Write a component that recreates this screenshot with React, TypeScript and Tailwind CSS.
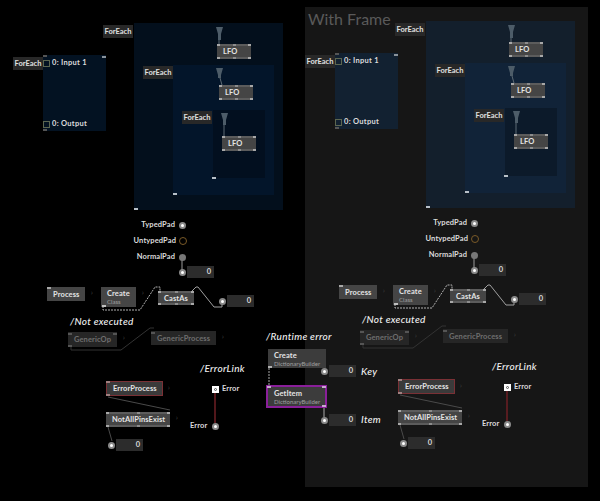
import React from 'react'

const font = { fontFamily: 'Lato, "Open Sans", sans-serif' }

const Pins = ({ className = '' }: { className?: string }) => (
  <div className={`absolute left-0 right-0 h-[2px] flex justify-between bg-[#5c5c5c] ${className}`}>
    <span className="w-[3px] bg-[#a8a8a8]" />
    <span className="w-[3px] bg-[#8c8c8c]" />
    <span className="w-[3px] bg-[#a8a8a8]" />
  </div>
)

type NodeProps = { className: string; label: string; sub?: string; pins?: boolean; text?: string; arrow?: boolean }

const Node = ({ className, label, sub, pins = true, text = 'text-[#e4e4e4]', arrow = false }: NodeProps) => (
  <div className={`absolute flex flex-col justify-center pl-[6px] text-[7.5px] leading-[9px] font-bold tracking-[0.1px] ${text} ${className}`}>
    {pins && <Pins className="top-0" />}
    <span>{label}</span>
    {sub && <span className="text-[6px] leading-[7px] font-normal tracking-normal text-[#a0a0a0]">{sub}</span>}
    {pins && <Pins className="bottom-0" />}
    {arrow && <span className="absolute right-[-8px] top-[1px] text-[8px] font-normal text-[#3a3a3a]">›</span>}
  </div>
)

const Tag = ({ className }: { className: string }) => (
  <div className={`absolute h-[13px] w-[30px] bg-[#282828] text-[7.5px] leading-[13px] font-bold text-[#e0e0e0] text-center ${className}`}>ForEach</div>
)

const Dot = () => (
  <span className="w-[7px] h-[7px] rounded-full bg-[#8a8a8a] flex items-center justify-center">
    <span className="w-[3px] h-[3px] rounded-full bg-white" />
  </span>
)

const Pad = ({ className }: { className: string }) => (
  <div className={`absolute flex items-center gap-[1px] ${className}`}>
    <Dot />
    <div className="w-[27px] h-[12px] bg-[#2c2c2c] text-[7.5px] leading-[12px] text-right pr-[3px] font-bold text-[#d8d8d8]">0</div>
  </div>
)

const Note = ({ className, children }: { className: string; children: React.ReactNode }) => (
  <div className={`absolute text-[10px] leading-[12px] italic font-medium tracking-[0.3px] text-[#f0f0f0] whitespace-nowrap ${className}`}>{children}</div>
)

const Small = ({ className }: { className: string }) => <span className={`absolute w-[4px] h-[2px] ${className}`} />

// everything that exists twice: once on black, once inside the frame
const Patch = ({ className }: { className: string }) => (
  <div className={`absolute inset-0 ${className}`}>
    <div className="absolute left-[43px] top-[55px] w-[63px] h-[76px] bg-[#0a3a70]/30" />
    <div className="absolute left-[134px] top-[23px] w-[149px] h-[187px] bg-[#0a3a70]/25" />
    <div className="absolute left-[173px] top-[65px] w-[101px] h-[130px] bg-[#0a3f80]/15" />
    <div className="absolute left-[213px] top-[110px] w-[52px] h-[68px] bg-black/25" />

    <svg className="absolute left-0 top-0" width="600" height="501" fill="none">
      <path d="M216 27h7l-2 7v6h-3v-6z" fill="#4d5c68" />
      <path d="M216 68h7l-2 7v3h-3v-3z" fill="#4d5c68" />
      <path d="M221 113h7l-2 7v5h-3v-5z" fill="#4d5c68" />
      <path d="M219 40v4M220 78l2 7M224 125v11" stroke="#5d6a74" />
      <path d="M182 260v10" stroke="#9a9a9a" />
      <path d="M103 306v4h37l15-23h5v4" stroke="#b0b0b0" strokeDasharray="2 1" />
      <path d="M192 291l4-4h2l16 20h8v-5" stroke="#a0a0a0" />
      <path d="M71 347v3h50l29-22h4" stroke="#333" />
      <path d="M108 397l62 13M108 427l4 14" stroke="#4a4a4a" />
      <path d="M215 393v30" stroke="#6e1f24" strokeWidth="1.5" />
    </svg>

    <Tag className="left-[103px] top-[25px]" />
    <Tag className="left-[143px] top-[66px]" />
    <Tag className="left-[182px] top-[111px]" />
    <Tag className="left-[13px] top-[57px]" />

    <Node className="left-[217px] top-[44px] w-[34px] h-[15px] bg-[#454545]" label="LFO" />
    <Node className="left-[219px] top-[85px] w-[34px] h-[15px] bg-[#454545]" label="LFO" />
    <Node className="left-[222px] top-[136px] w-[34px] h-[15px] bg-[#454545]" label="LFO" />

    <Small className="left-[134px] top-[208px] bg-[#b8c0c8]" />
    <Small className="left-[173px] top-[193px] bg-[#b8c0c8]" />
    <Small className="left-[212px] top-[177px] bg-[#b8c0c8]" />
    <Small className="left-[102px] top-[56px] bg-[#8a929a]" />
    <Small className="left-[43px] top-[55px] border border-[#555]" />
    <Small className="left-[43px] top-[129px] border border-[#555]" />

    <div className="absolute left-[43px] top-[57px] h-[73px] flex flex-col justify-between">
      <div className="flex items-center gap-[2px]">
        <span className="w-[7px] h-[7px] border border-[#5c6650]" />
        <span className="text-[7.5px] leading-[12px] font-bold tracking-[0.3px] text-[#dcdcdc] whitespace-nowrap">0: Input 1</span>
      </div>
      <div className="flex items-center gap-[2px]">
        <span className="w-[7px] h-[7px] border border-[#5c6650]" />
        <span className="text-[7.5px] leading-[12px] font-bold tracking-[0.3px] text-[#dcdcdc] whitespace-nowrap">0: Output</span>
      </div>
    </div>

    <div className="absolute left-[125px] top-[219px] w-[62px] flex flex-col items-end gap-[4px] text-[7.5px] leading-[12px] font-bold tracking-[0.1px] text-[#dcdcdc]">
      <div className="flex items-center gap-[4px] pr-[1px]">TypedPad<Dot /></div>
      <div className="flex items-center gap-[3px]">UntypedPad<span className="w-[8px] h-[8px] rounded-full border-[1.5px] border-[#7a5a28]" /></div>
      <div className="flex items-center gap-[4px] pr-[1px]">NormalPad<span className="w-[7px] h-[7px] rounded-full bg-[#777]" /></div>
    </div>
    <Pad className="left-[179px] top-[266px]" />

    <Node className="left-[47px] top-[287px] w-[38px] h-[14px] bg-[#454545]" label="Process" pins={false} arrow />
    <Small className="left-[47px] top-[287px] bg-[#a8a8a8]" />
    <Node className="left-[101px] top-[287px] w-[35px] h-[20px] bg-[#454545]" label="Create" sub="Class" pins={false} arrow />
    <Small className="left-[102px] top-[305px] bg-[#c0c0c0]" />
    <Node className="left-[158px] top-[291px] w-[36px] h-[14px] bg-[#454545]" label="CastAs" />
    <Pad className="left-[219px] top-[295px]" />

    <Note className="left-[70px] top-[315px]">/Not executed</Note>
    <Node className="left-[68px] top-[332px] w-[49px] h-[15px] bg-[#262626]" label="GenericOp" pins={false} text="text-[#6e6e6e]" arrow />
    <Small className="left-[68px] top-[333px] bg-[#555]" />
    <Small className="left-[113px] top-[333px] bg-[#555]" />
    <Small className="left-[68px] top-[345px] bg-[#555]" />
    <Node className="left-[151px] top-[331px] w-[65px] h-[14px] bg-[#262626]" label="GenericProcess" pins={false} text="text-[#6e6e6e]" arrow />
    <Small className="left-[151px] top-[332px] bg-[#555]" />

    <Node className="left-[106px] top-[381px] w-[57px] h-[15px] bg-[#3a3a3a] border border-[#7a3035]" label="ErrorProcess" pins={false} arrow />
    <Small className="left-[106px] top-[381px] bg-[#a08080]" />
    <Small className="left-[106px] top-[394px] bg-[#a08080]" />
    <Node className="left-[106px] top-[412px] w-[64px] h-[15px] bg-[#454545]" label="NotAllPinsExist" arrow />
    <Pad className="left-[108px] top-[439px]" />

    <Note className="left-[200px] top-[362px]">/ErrorLink</Note>
    <div className="absolute left-[212px] top-[383px] flex items-center gap-[3px] text-[7.5px] leading-[12px] font-bold tracking-[0.1px] text-[#dcdcdc]">
      <span className="w-[7px] h-[7px] bg-white flex items-center justify-center">
        <span className="w-[3px] h-[3px] rounded-full border border-[#555]" />
      </span>
      Error
    </div>
    <div className="absolute left-[190px] top-[420px] flex items-center gap-[5px] text-[7.5px] leading-[12px] font-bold tracking-[0.1px] text-[#dcdcdc]">
      Error
      <Dot />
    </div>
  </div>
)

export default function App() {
  return (
    <div className="relative w-[600px] h-[501px] overflow-hidden bg-black" style={font}>
      <div className="absolute left-[305px] top-[7px] w-[283px] h-[480px] bg-[#161616]">
        <span className="absolute left-[3px] top-0 text-[16px] leading-[23px] text-[#5a5a5a]">With Frame</span>
      </div>

      <Patch className="" />
      <Patch className="left-[292px] top-[-2px]" />

      <Note className="left-[266px] top-[330px]">/Runtime error</Note>
      <svg className="absolute left-0 top-0" width="600" height="501" fill="none">
        <path d="M269 368v17" stroke="#aaa" strokeDasharray="2 1" />
        <path d="M324 408v9" stroke="#aaa" />
      </svg>
      <Node className="left-[268px] top-[349px] w-[58px] h-[19px] bg-[#3c3c3c]" label="Create" sub="DictionaryBuilder" pins={false} />
      <Node className="left-[266px] top-[385px] w-[61px] h-[23px] bg-[#3c3c3c] border-2 border-[#8a1f9a]" label="GetItem" sub="DictionaryBuilder" pins={false} />
      <Small className="left-[268px] top-[366px] bg-[#b0b0b0]" />
      <Small className="left-[267px] top-[386px] bg-[#c8a8d0]" />
      <Small className="left-[322px] top-[386px] bg-[#c8a8d0]" />
      <Small className="left-[322px] top-[405px] bg-[#c8a8d0]" />
      <Pad className="left-[321px] top-[365px]" />
      <Note className="left-[361px] top-[365px]">Key</Note>
      <Pad className="left-[321px] top-[414px]" />
      <Note className="left-[361px] top-[413px]">Item</Note>
    </div>
  )
}
